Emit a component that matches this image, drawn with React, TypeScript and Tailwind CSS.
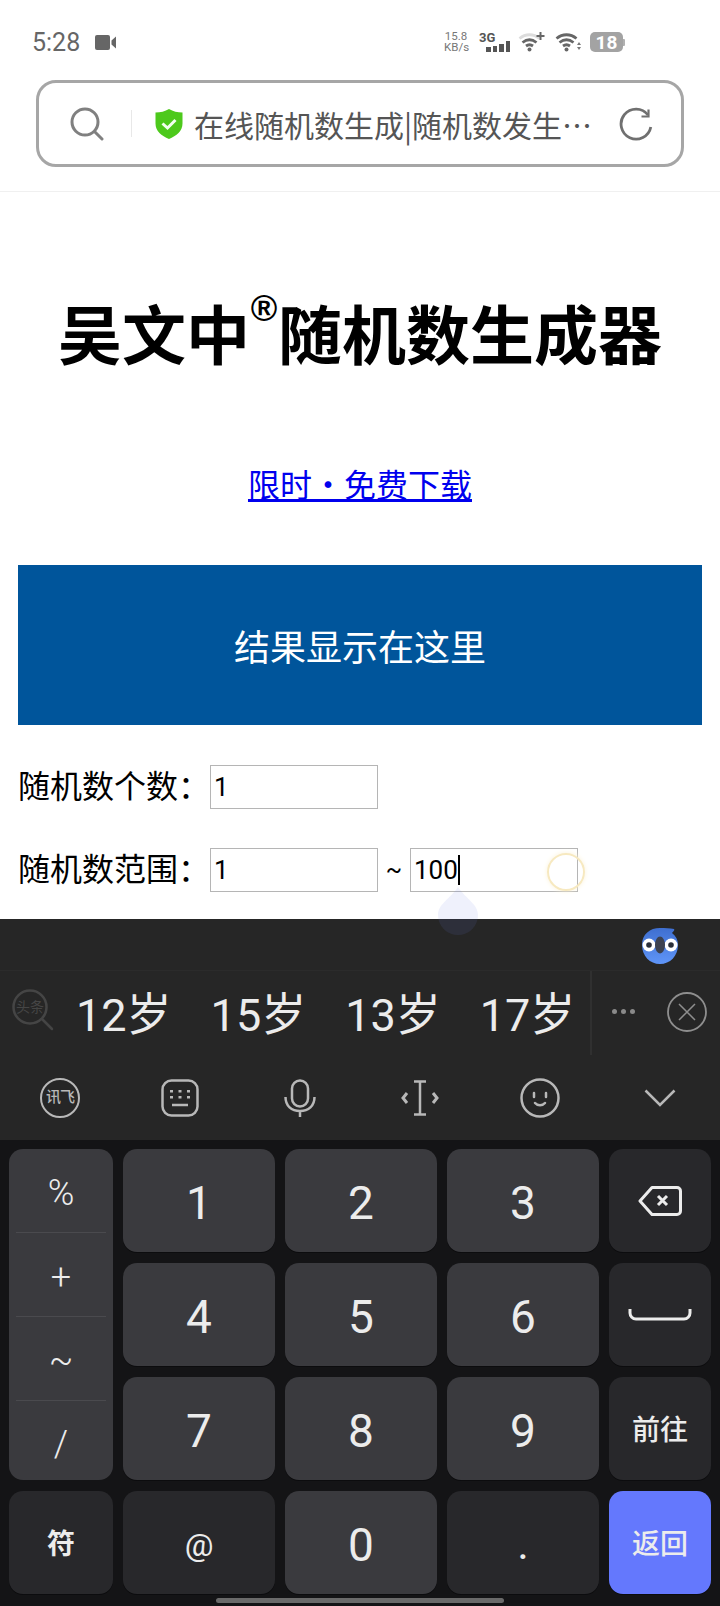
import type { ReactNode } from "react";
import { twMerge } from "tailwind-merge";

const SearchIcon = () => (
	<svg width="34" height="34" viewBox="0 0 34 34" fill="none" stroke="#808080" strokeWidth="3" strokeLinecap="round">
		<circle cx="15" cy="15" r="13" />
		<path d="M25 25l7 7" />
	</svg>
);

const ShieldIcon = () => (
	<svg width="28" height="30" viewBox="0 0 28 30">
		<path d="M14 0c4 2.500 8.500 3.500 13.500 3.500v11c0 7.500-6 12.500-13.500 15.500C6.500 27 .5 22 .5 14.500v-11C5.500 3.500 10 2.500 14 0z" fill="#4dc91c" />
		<path d="M7.500 14.500l5 4.500 8-8" fill="none" stroke="#f2fff0" strokeWidth="3" />
	</svg>
);

const RefreshIcon = () => (
	<svg width="34" height="34" viewBox="0 0 34 34" fill="none" stroke="#707070" strokeWidth="2.800">
		<path d="M31.800 20A15 15 0 1 1 29 8" />
		<path d="M29.500 2.500v7h-7" strokeWidth="2.200" />
	</svg>
);

const WifiIcon = ({ plus = false }: { plus?: boolean }) => (
	<svg width="27" height="20" viewBox="0 0 27 20" fill="none" strokeWidth="2.800">
		<path d="M1.500 6.500c6-5 14-5 20 0" stroke={plus ? "#dcdcdc" : "#666"} />
		<path d="M4.500 10.500c4.500-3.500 9.500-3.500 14 0" stroke="#666" />
		<path d="M8 14c2.500-1.800 4.500-1.800 7 0" stroke="#666" />
		<circle cx="11.500" cy="17.500" r="2" fill="#666" />
		{plus ? (
			<path d="M22.500 0v8M18.500 4h8" stroke="#666" strokeWidth="2" />
		) : (
			<path d="M24 10l-2 3h4zM24 18l-2-3h4z" fill="#777" stroke="none" />
		)}
	</svg>
);

const StatusBar = () => (
	<div className="h-[72px] shrink-0 flex items-center pl-[32px] pt-[12px] text-[#666]">
		<span className="text-[25px] leading-none">5:28</span>
		<svg className="ml-[15px]" width="21" height="15" viewBox="0 0 21 15" fill="#666">
			<rect x="0" y="0" width="15" height="15" rx="2" />
			<path d="M16.500 5.500l4.500-4v12l-4.500-4z" />
		</svg>
		<div className="ml-auto mr-[95px] flex items-center">
			<div className="w-[24px] text-center text-[11.500px] leading-[11px] text-[#777]">
				<div>15.8</div>
				<div>KB/s</div>
			</div>
			<div className="ml-[11px] w-[31px] h-[20px] relative">
				<span className="block text-[13px] leading-[12px] font-bold text-[#555]">3G</span>
				<div className="absolute right-0 bottom-0 flex items-end gap-[2px]">
					<i className="block w-[4.500px] h-[5px] bg-[#555]" />
					<i className="block w-[4.500px] h-[6px] bg-[#555]" />
					<i className="block w-[4.500px] h-[8px] bg-[#555]" />
					<i className="block w-[4.500px] h-[11px] bg-[#555]" />
				</div>
			</div>
			<div className="ml-[8px]">
				<WifiIcon plus />
			</div>
			<div className="ml-[10px]">
				<WifiIcon />
			</div>
			<div className="ml-[8px] flex items-center">
				<div className="w-[33px] h-[20px] rounded-[5px] bg-[#a3a3a3] flex items-center justify-center text-white text-[19px] leading-none font-bold">18</div>
				<div className="w-[2px] h-[7px] bg-[#b0b0b0] rounded-r-[1px]" />
			</div>
		</div>
	</div>
);

const UrlBar = () => (
	<div className="shrink-0 px-[36px] pt-[8px] pb-[24px] border-b border-[#f0f0f0]">
		<div className="h-[87px] w-[648px] border-[3px] border-[#a6a6a6] rounded-[20px] flex items-center pl-[31px]">
			<SearchIcon />
			<div className="ml-[27px] w-px h-[27px] bg-[#e8e8e8]" />
			<div className="ml-[23px]">
				<ShieldIcon />
			</div>
			<span className="ml-[11px] pt-[1px] w-[400px] text-[30px] leading-none text-[#555] whitespace-nowrap font-[family-name:'Noto_Sans_CJK_SC',sans-serif]">在线随机数生成|随机数发生…</span>
			<div className="ml-[25px]">
				<RefreshIcon />
			</div>
		</div>
	</div>
);

const Field = ({ value, focused = false }: { value: string; focused?: boolean }) => (
	<div className="w-[168px] h-[44px] border border-[#b5b5b5] flex items-center pl-[3px] text-[26px] leading-none text-black">
		{value}
		{focused && <span className="w-[2px] h-[30px] bg-black" />}
	</div>
);

const Page = () => (
	<div className="shrink-0 px-[18px] relative h-[727px]">
		<h1 className="mt-[106px] text-center text-[64px] leading-[80px] font-bold text-black whitespace-nowrap">
			吴文中
			<span className="inline-block w-[28px] text-[36px] leading-none align-[24px] -translate-y-[14px] font-[family-name:'Liberation_Sans',sans-serif]">®</span>
			随机数生成器
		</h1>
		<p className="mt-[84px] text-center text-[32px] leading-[48px]">
			<a href="#" className="text-[#0000ee] underline">
				限时・免费下载
			</a>
		</p>
		<div className="mt-[55px] h-[160px] bg-[#00559b] flex items-center justify-center text-white text-[36px] pt-[8px]">结果显示在这里</div>
		<div className="mt-[40px] flex items-center text-[32px] leading-none text-black">
			<span className="w-[192px]">随机数个数：</span>
			<Field value="1" />
		</div>
		<div className="mt-[39px] flex items-center text-[32px] leading-none text-black">
			<span className="w-[192px]">随机数范围：</span>
			<Field value="1" />
			<span className="w-[32px] text-center text-[24px]">~</span>
			<Field value="100" focused />
		</div>
		{/* 光标水滴和触摸圆圈，压在输入框和键盘上面 */}
		<svg className="absolute left-[438px] top-[695px]" width="40" height="48" viewBox="0 0 40 48">
			<path d="M20 0C28 12 40 17 40 28a20 20 0 0 1-40 0C0 17 12 12 20 0z" fill="#6a82e0" fillOpacity="0.11" />
		</svg>
		<div className="absolute left-[547px] top-[661px] w-[38px] h-[38px] rounded-full border-[2px] border-[#f7e9c0] shadow-[0_0_5px_#fbf3da]" />
	</div>
);

const BirdIcon = () => (
	<svg width="36" height="36" viewBox="0 0 36 36">
		<defs>
			<linearGradient id="bird" x1="0" y1="0" x2="0" y2="1">
				<stop offset="0" stopColor="#3f6fd0" />
				<stop offset="1" stopColor="#5f95f8" />
			</linearGradient>
		</defs>
		<path d="M18 0c5 0 10 0 14 1 1 1-1 3-2 4 4 3 6 7 6 12 0 11-8 19-18 19S0 28 0 17 8 0 18 0z" fill="url(#bird)" />
		<circle cx="7" cy="17" r="6.500" fill="#fff" />
		<circle cx="29" cy="17" r="6.500" fill="#fff" />
		<circle cx="7" cy="17" r="2.800" fill="#2a2f3a" />
		<circle cx="29" cy="17" r="2.800" fill="#2a2f3a" />
		<ellipse cx="18" cy="17" rx="5" ry="8.500" fill="#3d4250" />
	</svg>
);

const CandidateSearch = () => (
	<svg width="42" height="42" viewBox="0 0 42 42" fill="none" stroke="#454545" strokeWidth="2.500">
		<circle cx="18" cy="18" r="16.500" />
		<path d="M30 30l10 10" strokeLinecap="round" />
		<text x="18" y="23" textAnchor="middle" fontSize="14" fill="#454545" stroke="none">
			头条
		</text>
	</svg>
);

const Candidates = () => (
	<div className="h-[85px] flex border-t border-[#2b2b2b]">
		<div className="w-[592px] pl-[12px] pb-[6px] flex items-center border-r-2 border-[#303030]">
			<CandidateSearch />
			<div className="ml-[22px] pt-[10px] flex gap-[39px] text-[45px] leading-none text-[#ececec]">
				<span>12岁</span>
				<span>15岁</span>
				<span>13岁</span>
				<span>17岁</span>
			</div>
		</div>
		<div className="flex-1 flex items-center pb-[3px]">
			<div className="ml-[20px] flex gap-[4px]">
				<i className="block w-[5px] h-[5px] rounded-full bg-[#8a8a8a]" />
				<i className="block w-[5px] h-[5px] rounded-full bg-[#8a8a8a]" />
				<i className="block w-[5px] h-[5px] rounded-full bg-[#8a8a8a]" />
			</div>
			<svg className="ml-[32px]" width="40" height="40" viewBox="0 0 40 40" fill="none" stroke="#8e8e8e" strokeWidth="1.800">
				<circle cx="20" cy="20" r="19" />
				<path d="M12 12l16 16M28 12L12 28" strokeWidth="1.500" />
			</svg>
		</div>
	</div>
);

const Toolbar = () => (
	<div className="h-[85px] grid grid-cols-6 items-center justify-items-center text-[#b8b8b8]">
		<div className="w-[40px] h-[40px] rounded-full border-[2.500px] border-[#b8b8b8] flex items-center justify-center text-[15px] leading-none tracking-[-1px] font-medium whitespace-nowrap">讯飞</div>
		<svg width="38" height="38" viewBox="0 0 38 38" fill="none" stroke="#b8b8b8" strokeWidth="2.500">
			<rect x="1.500" y="1.500" width="35" height="35" rx="9" />
			<g fill="#b8b8b8" stroke="none">
				<rect x="9" y="11" width="3" height="2.500" />
				<rect x="17.500" y="11" width="3" height="2.500" />
				<rect x="26" y="11" width="3" height="2.500" />
				<rect x="9" y="17" width="3" height="2.500" />
				<rect x="17.500" y="17" width="3" height="2.500" />
				<rect x="26" y="17" width="3" height="2.500" />
			</g>
			<path d="M11 26h16" />
		</svg>
		<svg width="32" height="38" viewBox="0 0 32 38" fill="none" stroke="#b8b8b8" strokeWidth="2.500">
			<rect x="8" y="1.500" width="16" height="26" rx="8" />
			<path d="M1.500 18c0 9 6 14 14.500 14s14.500-5 14.500-14M16 32v6" />
		</svg>
		<svg width="38" height="36" viewBox="0 0 38 36" fill="none" stroke="#b8b8b8" strokeWidth="2.500">
			<path d="M13 1.500h12M13 34.500h12M19 1.500v33" />
			<path d="M6 13l-4 5 4 5M32 13l4 5-4 5" strokeWidth="3" />
		</svg>
		<svg width="40" height="40" viewBox="0 0 40 40" fill="none" stroke="#b8b8b8" strokeWidth="2.500">
			<circle cx="20" cy="20" r="18.500" />
			<path d="M14 15v4M26 15v4" strokeLinecap="round" />
			<path d="M15 25c2.500 3 7.500 3 10 0" strokeLinecap="round" />
		</svg>
		<svg width="32" height="18" viewBox="0 0 32 18" fill="none" stroke="#b8b8b8" strokeWidth="2.500">
			<path d="M1.500 1.500L16 16 30.500 1.500" />
		</svg>
	</div>
);

const Key = ({ children, fn = false, className = "" }: { children: ReactNode; fn?: boolean; className?: string }) => {
	const base = "rounded-[14px] flex items-center justify-center text-[#ececec] shadow-[0_1px_0_#0c0c0e]";
	const look = fn ? "bg-[#28282b] text-[28px] font-medium pt-[4px]" : "bg-[#3a3a3e] text-[46px] pt-[5px]";
	return <div className={twMerge(base, look, className)}>{children}</div>;
};

const Keys = () => (
	<div className="flex-1 bg-[#141416] pl-[9px] pt-[9px] relative">
		<div className="grid grid-cols-[104px_152px_152px_152px_102px] grid-rows-[103px_103px_103px_103px] gap-x-[10px] gap-y-[11px] leading-none">
			<div className="row-span-3 rounded-[14px] bg-[#3a3a3e] flex flex-col px-[7px] text-[#ececec] text-[36px] font-light">
				<div className="h-[84px] pt-[5px] flex items-center justify-center border-b border-[#4a4a4e]">%</div>
				<div className="h-[84px] pt-[5px] flex items-center justify-center border-b border-[#4a4a4e]">+</div>
				<div className="h-[84px] pt-[5px] flex items-center justify-center border-b border-[#4a4a4e]">~</div>
				<div className="flex-1 flex items-center justify-center pt-[6px]">/</div>
			</div>
			<Key>1</Key>
			<Key>2</Key>
			<Key>3</Key>
			<Key fn className="pt-0">
				<svg width="44" height="30" viewBox="0 0 44 30" fill="none" stroke="#ececec" strokeWidth="3" strokeLinejoin="round">
					<path d="M14 1.500h25a3.500 3.500 0 0 1 3.500 3.500v20a3.500 3.500 0 0 1-3.500 3.500H14L2 15z" />
					<path d="M20 10l9 9M29 10l-9 9" />
				</svg>
			</Key>
			<Key>4</Key>
			<Key>5</Key>
			<Key>6</Key>
			<Key fn className="pt-0">
				<svg width="64" height="14" viewBox="0 0 64 14" fill="none" stroke="#ececec" strokeWidth="3">
					<path d="M2 1v4a6 6 0 0 0 6 6h48a6 6 0 0 0 6-6V1" />
				</svg>
			</Key>
			<Key>7</Key>
			<Key>8</Key>
			<Key>9</Key>
			<Key fn>前往</Key>
			<Key fn className="font-bold">符</Key>
			<Key fn className="text-[32px] font-normal">@</Key>
			<Key>0</Key>
			<Key fn className="text-[36px] pt-[8px]">.</Key>
			<Key fn className="bg-[#6478fd]">返回</Key>
		</div>
		<div className="absolute left-[216px] bottom-[3px] w-[288px] h-[5px] rounded-full bg-[#6a6a6a]" />
	</div>
);

export default function App() {
	return (
		<div className="w-[720px] h-[1606px] bg-white flex flex-col overflow-hidden font-[family-name:Roboto,'Noto_Sans_CJK_SC',sans-serif]">
			<StatusBar />
			<UrlBar />
			<Page />
			<div className="flex-1 flex flex-col bg-[#262626]">
				<div className="h-[51px] flex items-center justify-end pr-[42px] pt-[2px]">
					<BirdIcon />
				</div>
				<Candidates />
				<Toolbar />
				<Keys />
			</div>
		</div>
	);
}
